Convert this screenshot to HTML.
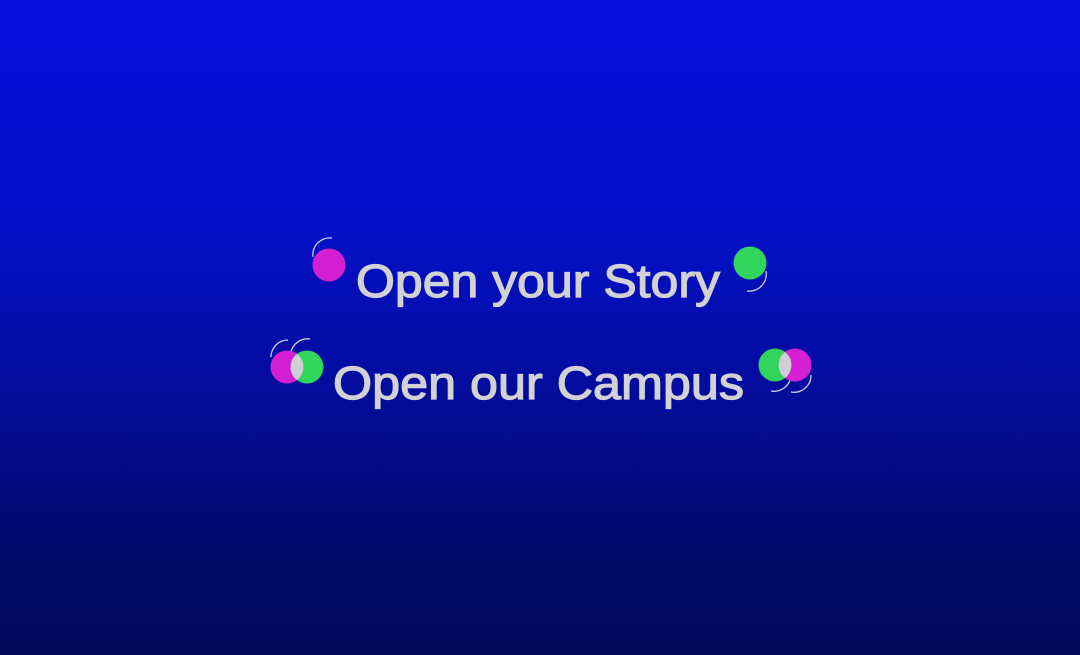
<!DOCTYPE html>
<html><head><style>
html,body{margin:0;padding:0;width:1080px;height:655px;overflow:hidden}
body{background:linear-gradient(180deg,#0510de 0%,#0510c8 35%,#030c9a 60%,#020a6a 85%,#020858 100%)}
svg{position:absolute;left:0;top:0}
</style></head><body>
<svg width="1080" height="655" viewBox="0 0 1080 655">
<g font-family="Liberation Sans, sans-serif" font-weight="normal" fill="#d2d2d6" stroke="#d2d2d6" stroke-width="1.2" font-size="46">
<text x="356" y="297" textLength="364" lengthAdjust="spacingAndGlyphs">Open your Story</text>
<text x="333" y="399" textLength="411" lengthAdjust="spacingAndGlyphs">Open our Campus</text>
</g>
<g fill="none" stroke="#d0d0e0" stroke-width="1.3">
<path d="M313 257 A17 17 0 0 1 332 238"/>
<path d="M766 271 A17 17 0 0 1 747 291"/>
<path d="M271 357 A17 17 0 0 1 288 340"/>
<path d="M291 352 A17 17 0 0 1 310 339"/>
<path d="M791 375 A17 17 0 0 1 771 391"/>
<path d="M811 375 A17 17 0 0 1 791 392"/>
</g>
<circle cx="329" cy="265" r="16.5" fill="#d420d2"/>
<circle cx="750" cy="263" r="16.5" fill="#30d65c"/>
<circle cx="287" cy="367" r="16.5" fill="#d420d2"/>
<circle cx="307" cy="367" r="16.5" fill="#30d65c"/>
<circle cx="775" cy="365" r="16.5" fill="#30d65c"/>
<circle cx="795" cy="365" r="16.5" fill="#d420d2"/>
<clipPath id="a"><circle cx="287" cy="367" r="16.5"/></clipPath>
<circle cx="307" cy="367" r="16.5" fill="#cfcdd6" clip-path="url(#a)"/>
<clipPath id="b"><circle cx="775" cy="365" r="16.5"/></clipPath>
<circle cx="795" cy="365" r="16.5" fill="#cfcdd6" clip-path="url(#b)"/>
</svg>
</body></html>
